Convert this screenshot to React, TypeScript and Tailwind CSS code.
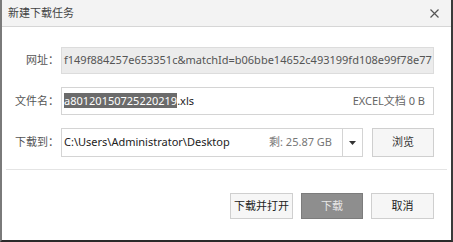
import React from "react";

const font = { fontFamily: '"Noto Sans", "Noto Sans CJK SC", sans-serif' };

export default function App() {
  return (
    <div
      className="w-[453px] h-[242px] bg-white border-l-2 border-l-[#7a7a7a] border-r-2 border-r-[#3a3a3a] border-b-2 border-b-[#2a2a2a] flex flex-col text-[11px] text-[#333]"
      style={font}
    >
      <div className="h-[27px] shrink-0 bg-[#f3f3f3] border-b border-[#d6d6d6] flex items-center justify-between pl-[6px] pr-[12px]">
        <span className="text-[11px] text-[#444]">新建下载任务</span>
        <svg width="9" height="9" viewBox="0 0 9 9" className="mt-[1px]">
          <path d="M0.5 0.5 L8.5 8.5 M8.5 0.5 L0.5 8.5" stroke="#555" strokeWidth="1.2" />
        </svg>
      </div>

      <div className="flex flex-col gap-[13px] pt-[20px] pl-[13px] pr-[17px]">
        <div className="flex items-center h-[27px]">
          <div className="w-[46px] text-right text-[#555] pr-[2px]">网址：</div>
          <div className="flex-1 h-full bg-[#ececec] border border-[#dcdcdc] flex items-center pl-[2px] overflow-hidden whitespace-nowrap text-[#555]">
            f149f884257e653351c&amp;matchId=b06bbe14652c493199fd108e99f78e77
          </div>
        </div>

        <div className="flex items-center h-[28px]">
          <div className="w-[46px] text-right text-[#555] pr-[2px]">文件名：</div>
          <div className="flex-1 h-full bg-white border border-[#d4d4d4] flex items-center pl-[2px] pr-[8px] justify-between whitespace-nowrap">
            <span className="text-[#222]">
              <span className="bg-[#6b6b6b] text-white">a80120150725220219</span>.xls
            </span>
            <span className="text-[#666]">EXCEL文档 0 B</span>
          </div>
        </div>

        <div className="flex items-center h-[29px]">
          <div className="w-[46px] text-right text-[#555] pr-[2px]">下载到：</div>
          <div className="w-[282px] h-full bg-white border border-[#d4d4d4] flex items-center pl-[2px] pr-[10px] justify-between whitespace-nowrap">
            <span className="text-[#222]">C:\Users\Administrator\Desktop</span>
            <span className="text-[#777]">剩: 25.87 GB</span>
          </div>
          <div className="w-[20px] h-full bg-white border border-l-0 border-[#d4d4d4] flex items-center justify-center">
            <svg width="7" height="4" viewBox="0 0 7 4">
              <path d="M0 0 L7 0 L3.5 4 Z" fill="#333" />
            </svg>
          </div>
          <div className="ml-[9px] w-[62px] h-full bg-[#f6f6f6] border border-[#cfcfcf] flex items-center justify-center text-[#333]">
            浏览
          </div>
        </div>
      </div>

      <div className="mt-[12px] mx-[4px] h-px bg-[#e4e4e4]" />

      <div className="flex justify-end gap-[8px] pr-[17px] pt-[23px]">
        <div className="w-[63px] h-[26px] bg-[#f6f6f6] border border-[#cfcfcf] flex items-center justify-center text-[#222]">
          下载并打开
        </div>
        <div className="w-[62px] h-[26px] bg-[#8e8e8e] border border-[#7c7c7c] flex items-center justify-center text-[#e6e6e6]">
          下载
        </div>
        <div className="w-[63px] h-[26px] bg-[#f6f6f6] border border-[#cfcfcf] flex items-center justify-center text-[#222]">
          取消
        </div>
      </div>
    </div>
  );
}
